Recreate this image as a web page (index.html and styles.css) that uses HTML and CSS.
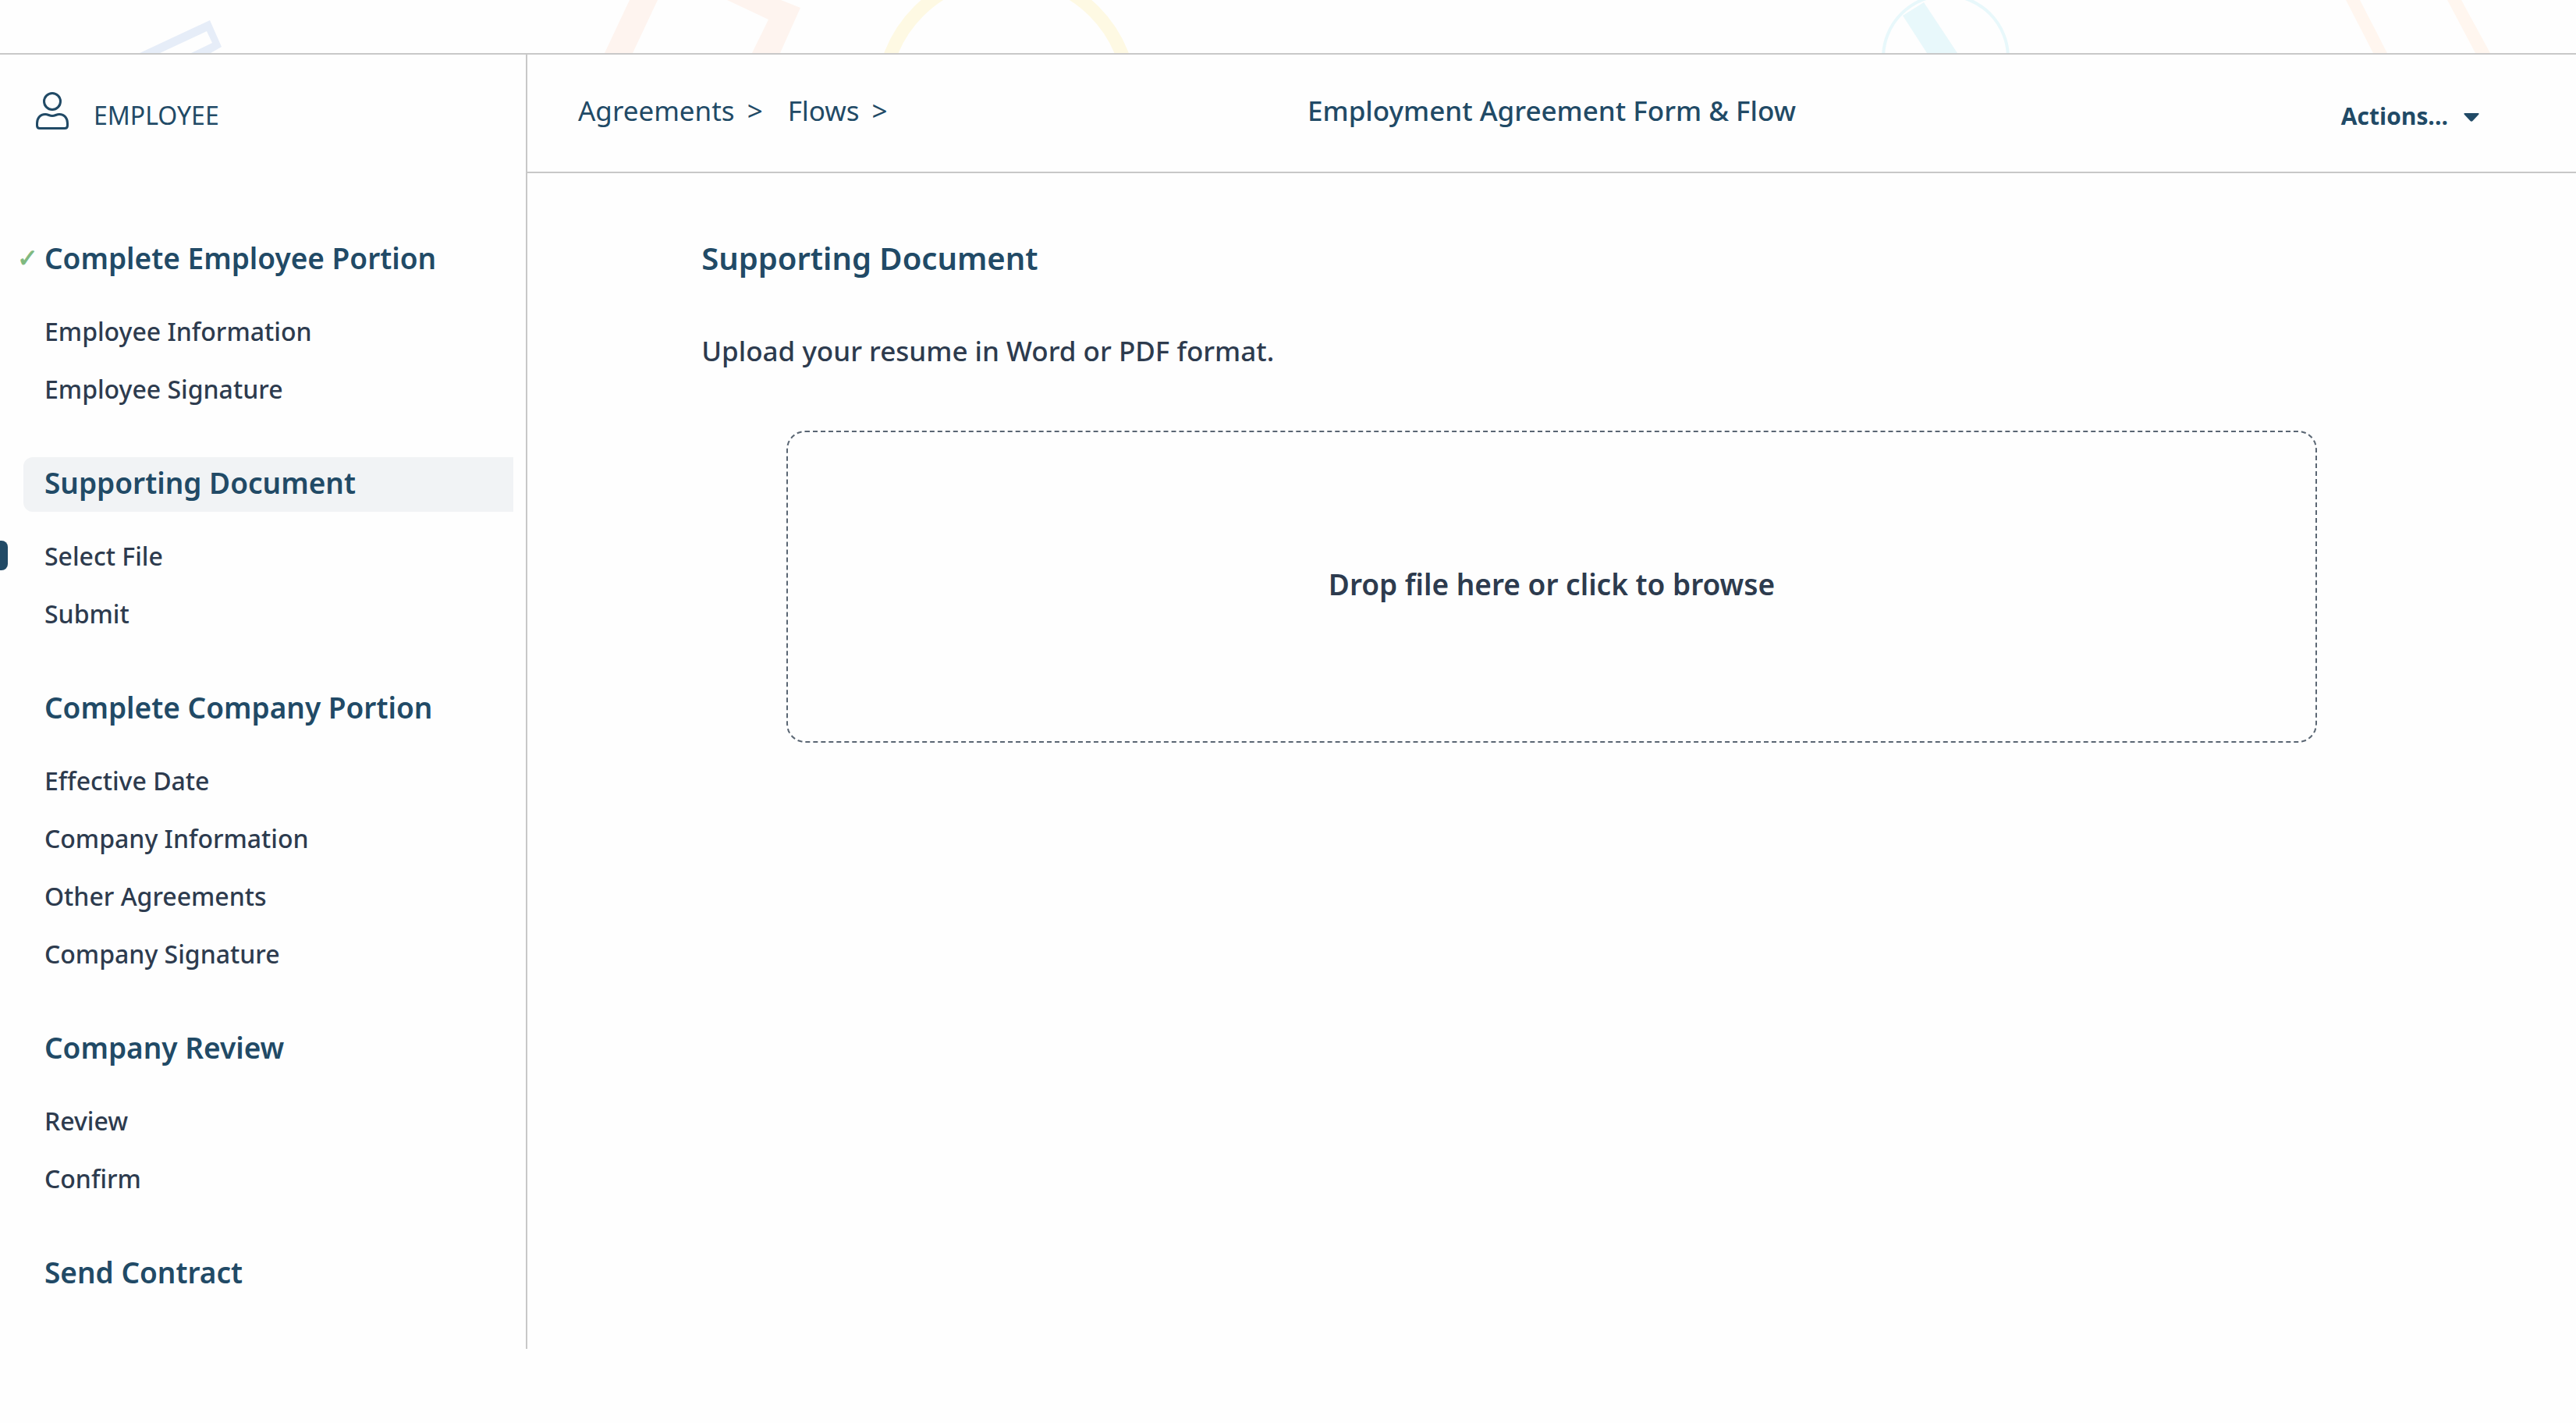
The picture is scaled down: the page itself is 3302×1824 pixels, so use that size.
FILE: index.html
```html
<!DOCTYPE html>
<html lang="en">
<head>
<meta charset="utf-8">
<title>Employment Agreement Form &amp; Flow</title>
<link rel="stylesheet" href="styles.css">
</head>
<body>
<div class="banner">
  <svg class="banner-art" viewBox="0 0 3302 68" preserveAspectRatio="xMidYMin slice" aria-hidden="true">
    <path fill="#e6edf8" fill-rule="evenodd" d="M179 68L269 26L284 60L270 68H245L272 55L265 40L205 68Z"/>
    <path fill="#fef4ef" d="M807 0H843L811 68H775ZM932 0H1001L1026 10L1000 68H964L985 25Z"/>
    <circle cx="1290" cy="127" r="159" fill="none" stroke="#fef9e3" stroke-width="17"/>
    <circle cx="2494" cy="74" r="80" fill="none" stroke="#e8f8fb" stroke-width="4"/>
    <path fill="#e8f8fb" d="M2466 3L2509 68H2470L2439 20Z"/>
    <path fill="#fff6ef" d="M3007 0H3025L3060 68H3042ZM3137 0H3155L3192 68H3173Z"/>
  </svg>
</div>
<div class="layout">
  <aside class="sidebar">
    <div class="role">
      <svg class="role-icon" viewBox="0 0 42 48" aria-hidden="true">
        <g fill="none" stroke="currentColor" stroke-width="3">
          <circle cx="21" cy="12" r="10.500"/>
          <path d="M12 28.500C16 28.500 17 30.500 21 30.500S26 28.500 30 28.500C37 28.500 40.500 34 40.500 40V43Q40.500 46.500 37 46.500H5Q1.500 46.500 1.500 43V40C1.500 34 5 28.500 12 28.500Z"/>
        </g>
      </svg>
      <span class="role-name">EMPLOYEE</span>
    </div>
    <nav class="steps" aria-label="Flow steps">
      <section class="step">
        <h2 class="step-title done">Complete Employee Portion</h2>
        <ul class="step-items">
          <li><a href="#">Employee Information</a></li>
          <li><a href="#">Employee Signature</a></li>
        </ul>
      </section>
      <section class="step">
        <h2 class="step-title active">Supporting Document</h2>
        <ul class="step-items">
          <li class="current"><a href="#" aria-current="step">Select File</a></li>
          <li><a href="#">Submit</a></li>
        </ul>
      </section>
      <section class="step">
        <h2 class="step-title">Complete Company Portion</h2>
        <ul class="step-items">
          <li><a href="#">Effective Date</a></li>
          <li><a href="#">Company Information</a></li>
          <li><a href="#">Other Agreements</a></li>
          <li><a href="#">Company Signature</a></li>
        </ul>
      </section>
      <section class="step">
        <h2 class="step-title">Company Review</h2>
        <ul class="step-items">
          <li><a href="#">Review</a></li>
          <li><a href="#">Confirm</a></li>
        </ul>
      </section>
      <section class="step">
        <h2 class="step-title">Send Contract</h2>
      </section>
    </nav>
  </aside>
  <div class="page">
    <header class="topbar">
      <nav class="crumbs" aria-label="Breadcrumb">
        <span class="crumb"><a href="#">Agreements</a><span>&gt;</span></span>
        <span class="crumb"><a href="#">Flows</a><span>&gt;</span></span>
      </nav>
      <h1 class="title">Employment Agreement Form &amp; Flow</h1>
      <button class="actions" type="button" aria-haspopup="menu">Actions...
        <svg class="caret" viewBox="0 0 20 12" aria-hidden="true"><path fill="currentColor" d="M1.500 0H18.500Q20.500 0 19 2L11.500 10Q10 11.500 8.500 10L1 2Q-.5 0 1.500 0Z"/></svg>
      </button>
    </header>
    <main class="content">
      <h2 class="content-title">Supporting Document</h2>
      <p class="content-text">Upload your resume in Word or PDF format.</p>
      <label class="dropzone" for="resume">Drop file here or click to browse</label>
      <input class="file-input" id="resume" type="file" accept=".doc,.docx,.pdf">
    </main>
  </div>
</div>
</body>
</html>
```
FILE: styles.css
```css
:root {
  --navy: #214a66;
  --ink: #2d3b4e;
  --rule: #c8c8c8;
}
* { box-sizing: border-box; }
body {
  min-height: 100vh;
  margin: 0;
  background: #fefefe;
  color: var(--ink);
  font-family: "Noto Sans", "Open Sans", sans-serif;
  font-size: 32px;
}
a { color: inherit; text-decoration: none; }
h1, h2, p, ul { margin: 0; padding: 0; }

.banner { height: 70px; border-bottom: 2px solid var(--rule); overflow: hidden; }
.banner-art { display: block; width: 100%; height: 68px; }

.layout { display: flex; align-items: stretch; }
.sidebar {
  flex: none;
  width: 676px;
  padding-bottom: 61px;
  border-right: 2px solid var(--rule);
}
.role {
  display: flex;
  align-items: center;
  gap: 32px;
  height: 228px;
  padding: 48px 0 132px 46px;
  color: var(--navy);
}
.role-icon { flex: none; width: 42px; height: 48px; }
.role-name { padding-top: 12px; line-height: 36px; }

.step-title {
  position: relative;
  margin: 0 16px 0 30px;
  padding-left: 27px;
  border-radius: 12px 0 0 12px;
  color: var(--navy);
  font-size: 37px;
  font-weight: 600;
  line-height: 66px;
  height: 70px;
}
.step-title.active { background: #f1f3f5; }
.step-title.done::before {
  content: "✓";
  position: absolute;
  left: -8px;
  color: #7fb97f;
  font-family: "DejaVu Sans", sans-serif;
  font-size: 32px;
  -webkit-text-stroke: 1px #7fb97f;
}
.step-items { padding: 19px 0 51px; list-style: none; }
.step-items li {
  display: flex;
  align-items: center;
  height: 74px;
  padding-left: 57px;
  font-weight: 500;
}
.step-items .current { position: relative; }
.step-items .current::before {
  content: "";
  position: absolute;
  left: 0;
  width: 10px;
  height: 38px;
  border-radius: 0 8px 8px 0;
  background: var(--navy);
}

.page { flex: 1; min-width: 0; }
.topbar {
  display: grid;
  grid-template-columns: 1fr auto 1fr;
  align-items: center;
  height: 152px;
  padding: 0 65px 8px;
  border-bottom: 2px solid var(--rule);
  color: var(--navy);
  font-size: 35px;
}
.crumbs { display: flex; gap: 32px; }
.crumb { display: flex; gap: 16px; }
.title { font-size: 35px; font-weight: 500; }
.actions {
  display: flex;
  align-items: center;
  justify-self: end;
  gap: 20px;
  margin-right: 59px;
  padding: 14px 0 0;
  border: 0;
  background: none;
  color: inherit;
  font: 700 30px "Open Sans", sans-serif;
}
.caret { width: 20px; height: 12px; margin-top: 6px; }

.content { width: 83%; margin: 0 auto; padding-top: 76px; }
.content-title { color: var(--navy); font-size: 40px; font-weight: 600; line-height: 66px; }
.content-text { padding: 54px 0 70px; font-size: 35px; font-weight: 500; line-height: 64px; }
.dropzone {
  display: flex;
  align-items: center;
  justify-content: center;
  width: 90%;
  height: 400px;
  margin: 0 auto;
  padding-bottom: 8px;
  border: 2px dashed #5a6673;
  border-radius: 24px;
  font-size: 37px;
  font-weight: 600;
  cursor: pointer;
}
.file-input { position: absolute; width: 1px; height: 1px; opacity: 0; }
```
